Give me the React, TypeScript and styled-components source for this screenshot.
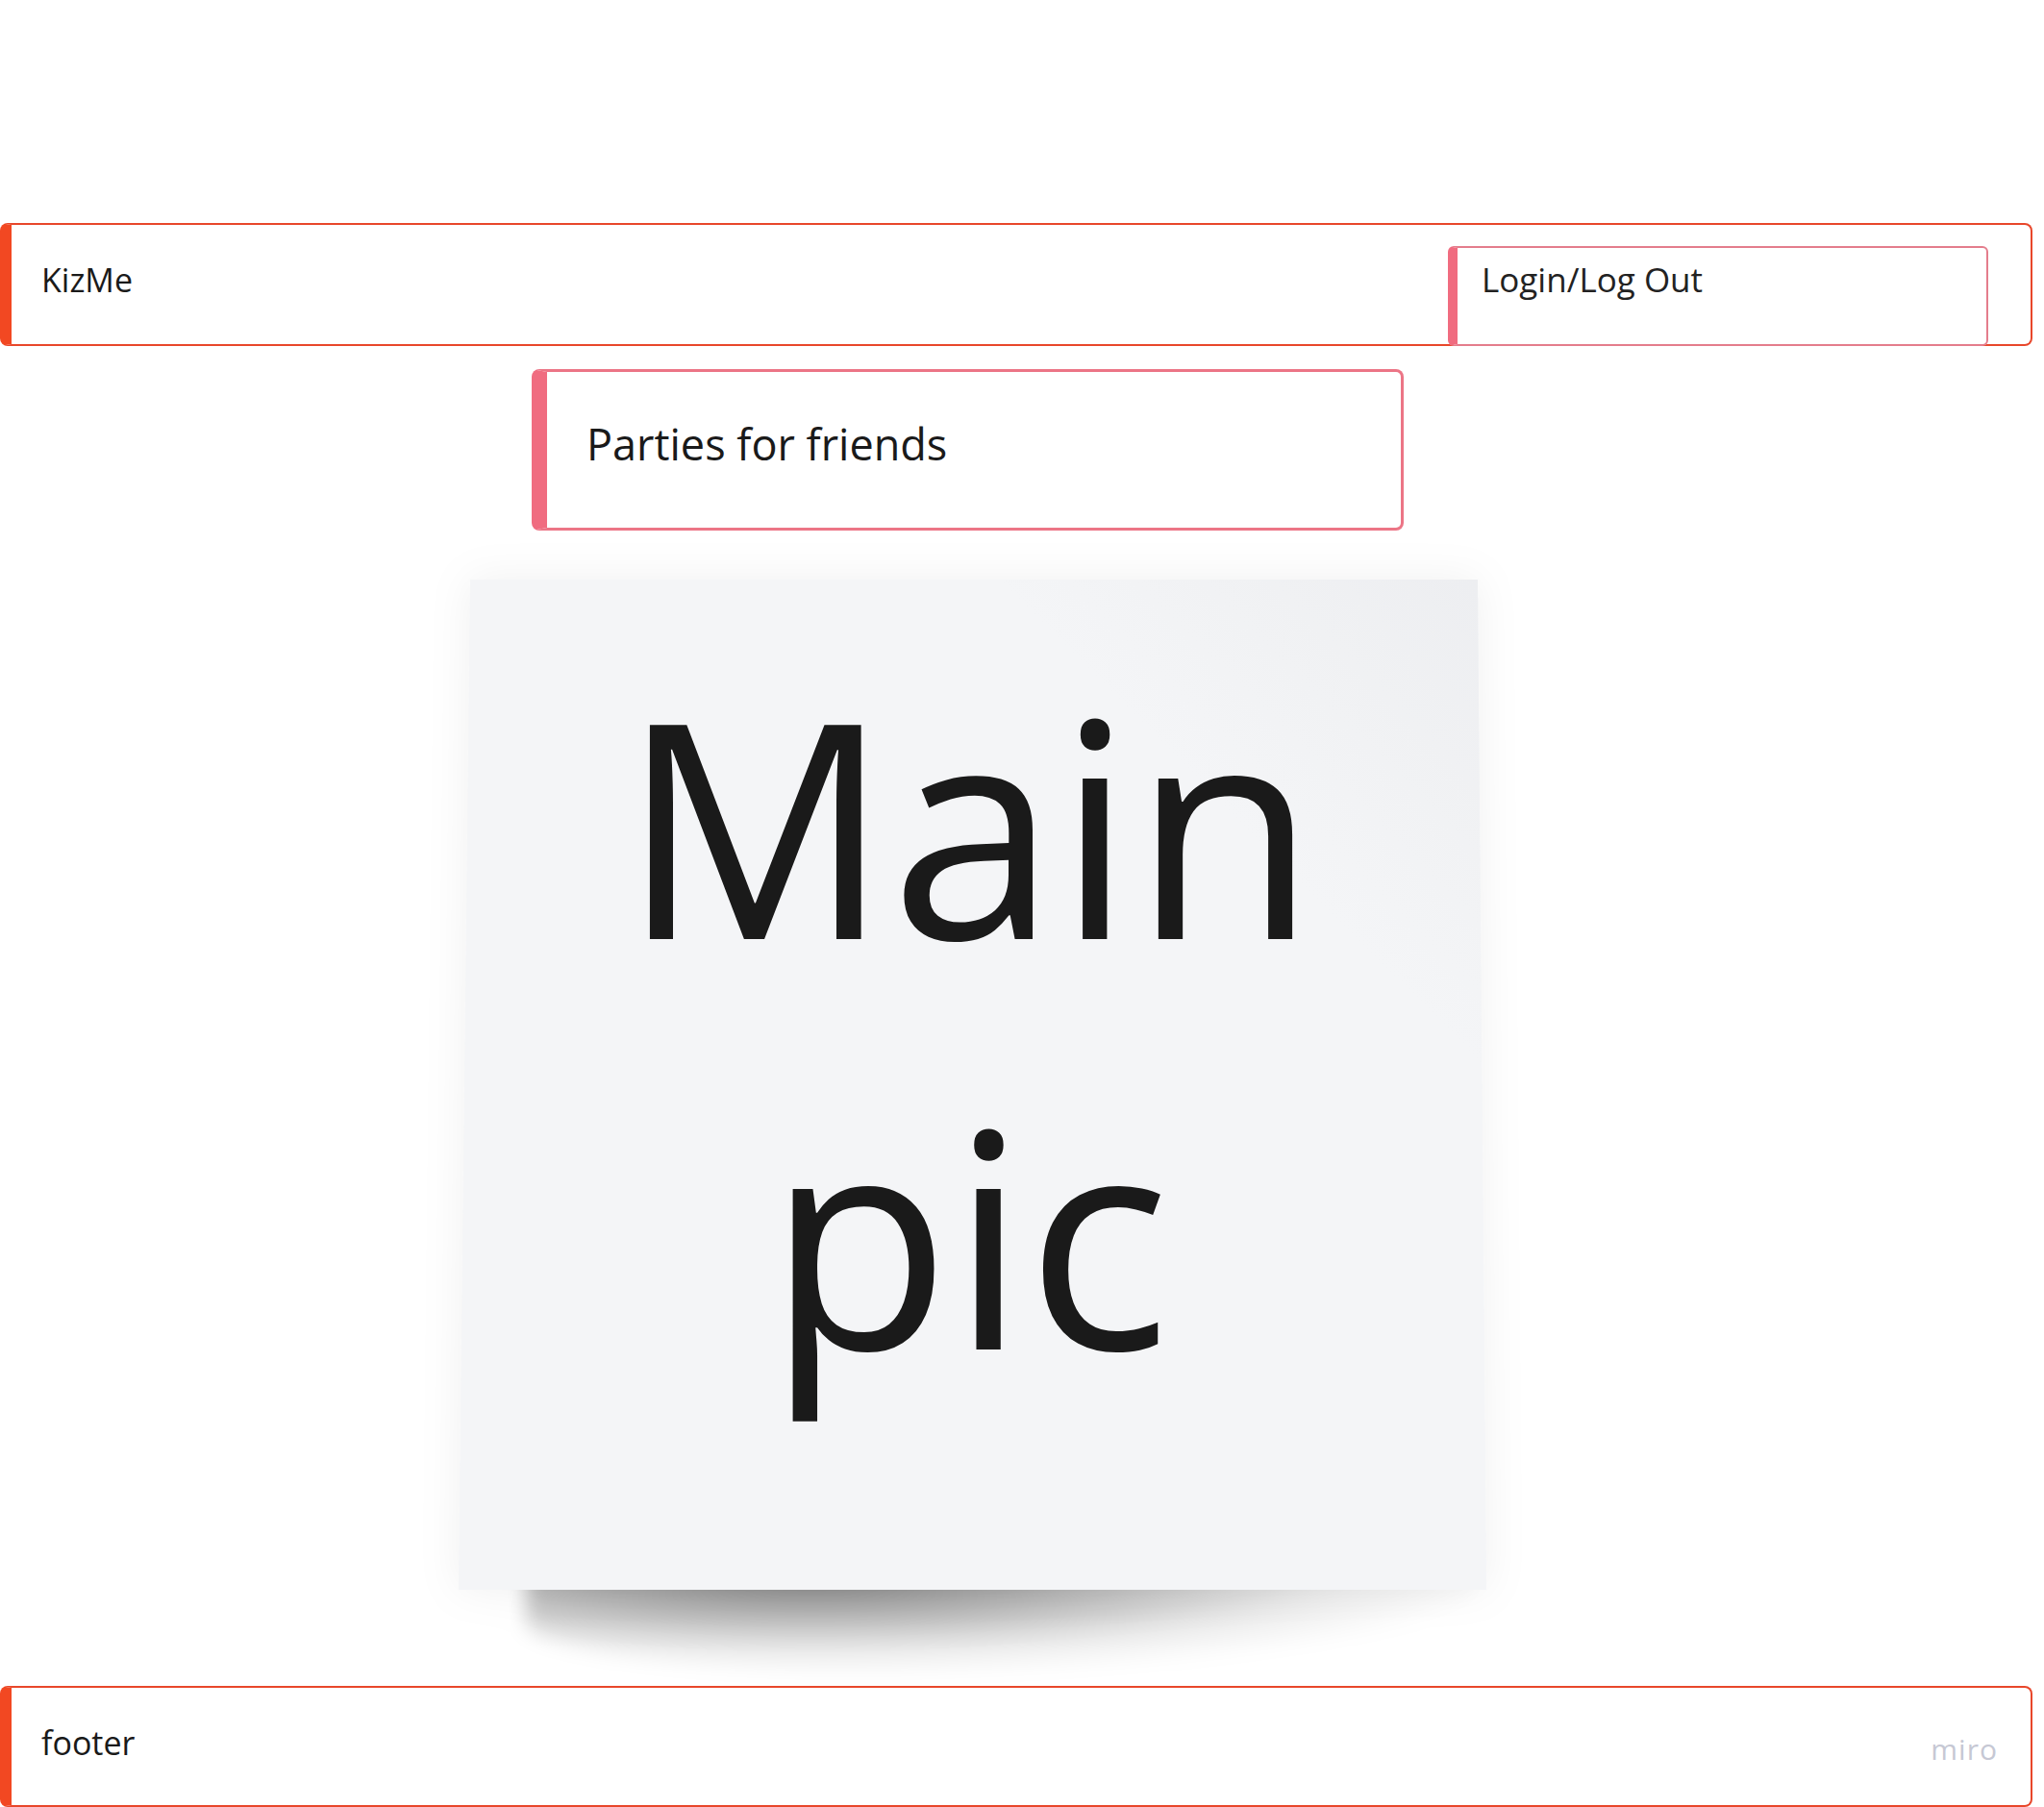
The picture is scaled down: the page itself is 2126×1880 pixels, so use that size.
import React from "react";
import styled, { createGlobalStyle } from "styled-components";

const GlobalStyle = createGlobalStyle`
  html, body {
    margin: 0;
    padding: 0;
    background: #ffffff;
    font-family: "Open Sans", "Liberation Sans", sans-serif;
    color: #1a1a1a;
  }
  * {
    box-sizing: border-box;
  }
`;

export default function App() {
  return (
    <>
      <GlobalStyle />
      <Page>
        <Header>
          <Brand>KizMe</Brand>
          <LoginBox>Login/Log Out</LoginBox>
        </Header>
        <Tagline>Parties for friends</Tagline>
        <StickyWrap>
          <Sticky>
            <StickyText>
              Main
              <br />
              pic
            </StickyText>
          </Sticky>
        </StickyWrap>
        <Footer>
          <FooterText>footer</FooterText>
          <Watermark>miro</Watermark>
        </Footer>
      </Page>
    </>
  );
}

const Page = styled.div`
  width: 2126px;
  height: 1880px;
  overflow: hidden;
  padding: 232px 12px 0 0;
  display: flex;
  flex-direction: column;
  align-items: flex-start;
`;

const Frame = styled.div`
  width: 2114px;
  height: 128px;
  flex-shrink: 0;
  display: flex;
  background: #ffffff;
  border: 2px solid #e8472b;
  border-left: 12px solid #f24822;
  border-radius: 8px;
`;

const Header = styled(Frame)`
  align-items: flex-start;
  justify-content: space-between;
`;

const Brand = styled.div`
  font-size: 34px;
  line-height: 46px;
  padding: 34px 0 0 31px;
`;

const LoginBox = styled.div`
  width: 562px;
  align-self: stretch;
  margin: 22px 44px -2px 0;
  background: #ffffff;
  border: 2px solid #e47d8c;
  border-left: 10px solid #f06c80;
  border-radius: 6px;
  padding: 9px 0 0 25px;
  font-size: 35px;
  line-height: 47px;
  color: #222222;
`;

const Tagline = styled.div`
  width: 907px;
  height: 168px;
  margin: 24px 0 0 553px;
  border: 3px solid #ec7586;
  border-left: 16px solid #f06c80;
  border-radius: 8px;
  padding: 44px 0 0 41px;
  font-size: 45px;
  line-height: 62px;
`;

const StickyWrap = styled.div`
  position: relative;
  isolation: isolate;
  width: 1069px;
  height: 1051px;
  margin: 51px 0 0 477px;
  flex-shrink: 0;
  filter: drop-shadow(0 0 22px rgba(0, 0, 0, 0.06));

  &::after {
    content: "";
    position: absolute;
    z-index: -1;
    left: 70px;
    right: 10px;
    top: calc(100% - 24px);
    height: 115px;
    background: radial-gradient(
      ellipse 75% 100% at 30% 0%,
      rgba(0, 0, 0, 0.55) 0%,
      rgba(0, 0, 0, 0.3) 40%,
      rgba(0, 0, 0, 0.08) 75%,
      rgba(0, 0, 0, 0) 100%
    );
    filter: blur(10px);
    border-radius: 0 0 50% 50%;
  }
`;

const Sticky = styled.div`
  width: 100%;
  height: 100%;
  background:
    linear-gradient(
      225deg,
      rgba(236, 237, 240, 0.9) 0%,
      rgba(238, 239, 241, 0.6) 12%,
      rgba(244, 245, 247, 0) 24%
    ),
    #f4f5f7;
  clip-path: polygon(12px 0, 1060px 0, 1069px 100%, 0 100%);
  display: flex;
  justify-content: center;
  padding-top: 40px;
`;

const StickyText = styled.div`
  font-size: 312px;
  line-height: 427px;
  text-align: center;
  color: #1a1a1a;
  margin-left: -8px;
`;

const Footer = styled(Frame)`
  margin-top: 100px;
  height: 126px;
  align-items: flex-start;
  justify-content: space-between;
`;

const FooterText = styled.div`
  font-size: 34px;
  line-height: 46px;
  padding: 34px 0 0 31px;
`;

const Watermark = styled.div`
  font-size: 30px;
  line-height: 40px;
  padding: 44px 34px 0 0;
  color: #c6c8d4;
  letter-spacing: 1px;
`;
